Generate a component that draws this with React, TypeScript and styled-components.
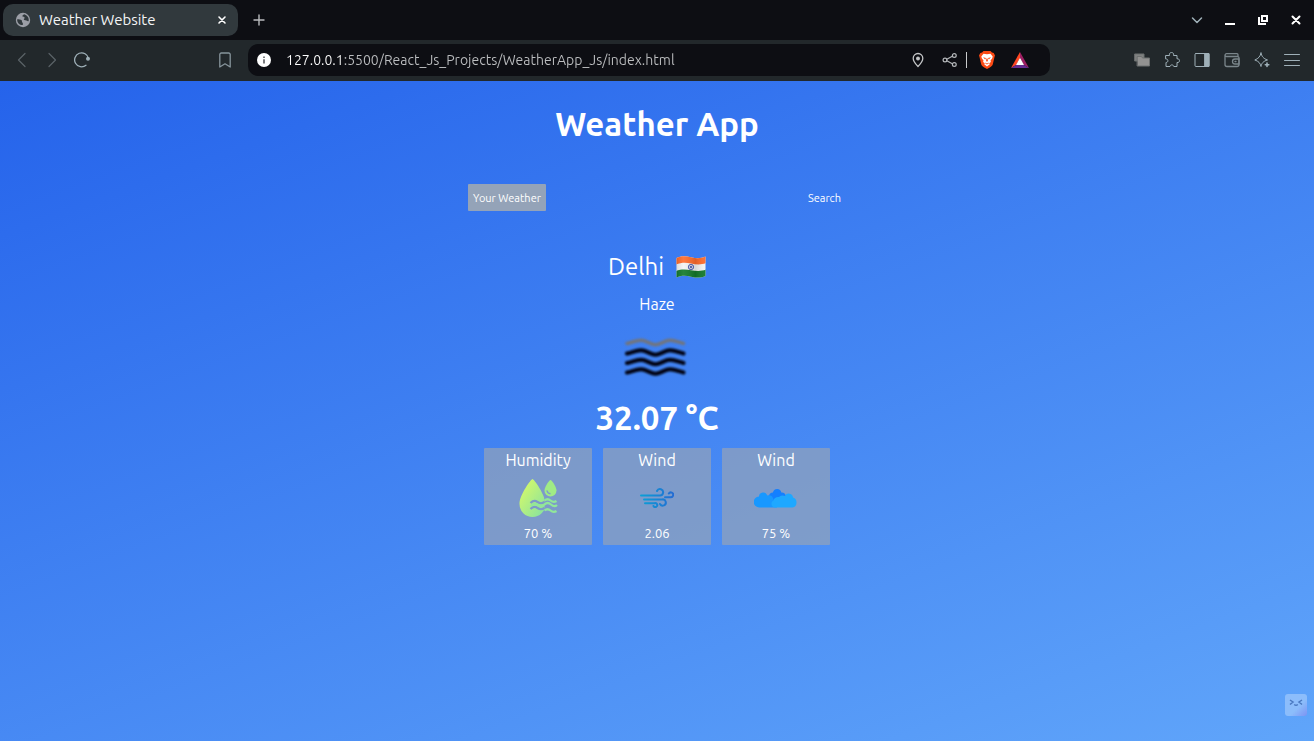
import React from "react";
import styled, { createGlobalStyle, css } from "styled-components";

const GlobalStyle = createGlobalStyle`
  *, *::before, *::after { box-sizing: border-box; }
  body { margin: 0; font-family: Ubuntu, "Noto Sans", sans-serif; }
  h1, h2, p { margin: 0; }
  svg { display: block; flex: none; }
`;

const Window = styled.div`
  display: flex;
  flex-direction: column;
  min-height: 100vh;
`;

const TabStrip = styled.header`
  display: flex;
  align-items: center;
  height: 40px;
  padding: 0 6px 0 3px;
  background: #0d0e13;
`;

const BrowserTab = styled.div`
  display: flex;
  align-items: center;
  gap: 8px;
  width: 235px;
  height: 32px;
  padding: 0 4px 0 12px;
  border-radius: 10px;
  background: #31393d;
`;

const TabTitle = styled.span`
  flex: 1;
  color: #f4f5f6;
  font-size: 15px;
  line-height: 20px;
  white-space: nowrap;
`;

const IconButton = styled.button<{ $color?: string }>`
  display: flex;
  align-items: center;
  justify-content: center;
  flex: none;
  width: 24px;
  height: 24px;
  padding: 0;
  border: 0;
  background: none;
  color: ${(p) => p.$color ?? "#9fb0b8"};
`;

const NewTab = styled.div`
  flex: 1;
  padding-left: 9px;
`;

const WindowControls = styled.div`
  display: flex;
  gap: 9px;
`;

const Toolbar = styled.nav`
  display: flex;
  align-items: center;
  height: 41px;
  padding: 0 10px 1px;
  background: #22282b;
`;

const NavGroup = styled.div`
  display: flex;
  gap: 6px;
`;

const BookmarkSlot = styled.div`
  width: 143px;
  padding-left: 119px;
`;

const AddressBar = styled.div`
  display: flex;
  align-items: center;
  flex: 1;
  min-width: 0;
  height: 32px;
  margin: 0 80px 0 11px;
  padding: 0 18px 0 4px;
  border-radius: 10px;
  background: #0d0e13;
`;

const AddressInput = styled.input`
  flex: 1;
  min-width: 0;
  height: 24px;
  margin-left: 10px;
  padding: 0;
  border: 0;
  outline: 0;
  font: inherit;
  font-size: 14px;
  color: transparent;
  background: linear-gradient(90deg, #ffffff 56px, #bcbec0 56px);
  -webkit-background-clip: text;
  background-clip: text;
`;

const AddressActions = styled.div`
  display: flex;
  align-items: center;
  gap: 8px;
`;

const Divider = styled.span`
  width: 1px;
  height: 16px;
  margin: 0 -4px;
  background: #c8cacc;
`;

const ShieldGroup = styled.div`
  display: flex;
  gap: 9px;
  margin-left: 4px;
`;

const Page = styled.main`
  display: flex;
  flex-direction: column;
  align-items: center;
  flex: 1;
  padding: 21px 16px;
  color: #fff;
  background: linear-gradient(160deg, #2563eb 0%, #60a5fa 100%);
`;

const headline = css`
  font-size: 33px;
  font-weight: 700;
  line-height: 44px;
`;

const Title = styled.h1`
  ${headline}
`;

const ViewTabs = styled.div`
  display: flex;
  justify-content: space-between;
  width: 378px;
  max-width: 100%;
  margin: 38px 0;
`;

const ViewTab = styled.button<{ $active?: boolean }>`
  height: 27px;
  padding: 0 5px;
  border: 0;
  border-radius: 1px;
  color: #fff;
  background: ${(p) => (p.$active ? "#94a3b8" : "transparent")};
  font: inherit;
  font-size: 11px;
  white-space: nowrap;
`;

const City = styled.h2`
  display: flex;
  align-items: center;
  gap: 12px;
  font-size: 24px;
  font-weight: 400;
  line-height: 36px;
`;

const Condition = styled.p`
  margin-top: 7px;
  font-size: 16px;
  line-height: 24px;
`;

const ConditionIcon = styled.div`
  display: flex;
  align-items: center;
  height: 80px;
`;

const Temperature = styled.p`
  ${headline}
`;

const Cards = styled.div`
  display: flex;
  flex-wrap: wrap;
  justify-content: center;
  gap: 11px;
  margin-top: 8px;
`;

const Card = styled.section`
  display: flex;
  flex-direction: column;
  align-items: center;
  width: 108px;
  padding-bottom: 2px;
  border-radius: 1px;
  background: rgba(148, 163, 184, 0.7);
`;

const CardTitle = styled.p`
  font-size: 16px;
  line-height: 24px;
`;

const CardIcon = styled.div`
  display: flex;
  align-items: center;
  height: 52px;
`;

const CardValue = styled.p`
  font-size: 13px;
  line-height: 19px;
`;

const Assistant = styled.button`
  position: fixed;
  right: 7px;
  bottom: 25px;
  width: 22px;
  height: 22px;
  padding: 0;
  border: 0;
  border-radius: 3px;
  background: linear-gradient(135deg, #8cbdfb 60%, #7c93f3 100%);
`;

type StrokeProps = { size?: number; width?: number; children: React.ReactNode };

const Stroke = ({ size = 16, width = 1, children }: StrokeProps) => (
  <svg
    width={size}
    height={size}
    viewBox={`0 0 ${size} ${size}`}
    fill="none"
    stroke="currentColor"
    strokeWidth={width}
    strokeLinecap="round"
    strokeLinejoin="round"
    aria-hidden="true"
  >
    {children}
  </svg>
);

const GlobeIcon = () => (
  <svg width="16" height="16" viewBox="0 0 16 16" aria-hidden="true">
    <circle cx="8" cy="8" r="7.2" fill="#9b9ea6" />
    <path
      d="M2.2 7.2c1.5 0 3.6.1 4.5 1.1.7.9-.2 1.6.7 2.2.7.4.5 1.5.4 2.6-3.2.1-6-2.4-5.600-5.900zM9.200 2.200c-1 .4-2.200 1.300-1.600 2.300.5.800 1.800.2 2.100 1.300.2.900-1.100.7-.9 1.700.2.900 2.500.5 3.700 1.500.5.5 1 .4 1.200-.2.4-3.200-1.500-5.700-4.500-6.600z"
      fill="#31393d"
    />
  </svg>
);

const InfoIcon = () => (
  <svg width="14" height="14" viewBox="0 0 14 14" aria-hidden="true">
    <circle cx="7" cy="7" r="7" fill="#fff" />
    <path d="M6.200 6.200h1.600v4.300H6.200zM6.200 3.400h1.600v1.600H6.200z" fill="#5a5c60" />
  </svg>
);

const BraveIcon = () => (
  <svg width="16" height="18" viewBox="0 0 16 18" aria-hidden="true">
    <path d="M4.500 0h7l1.500 1.600 1.700.3L16 4.500l-.5 1.500-1.700 7.200c-.4 1.400-1.500 2.200-3 3.200L8 18l-2.800-1.600c-1.500-1-2.600-1.800-3-3.200L.5 6 0 4.500l1.300-2.600L3 1.600z" fill="#fb4a14" />
    <path d="M4.500 2.700 8 3.300l3.500-.6 2.200 2.800-.5 1.800-1.700 2.200.4 1.500-1.700 1.200.6 1L8 15.400 5.200 13.200l.6-1-1.700-1.200.4-1.500-1.700-2.200-.5-1.800z" fill="#fff" />
    <path d="M4 6.300l3 .8-.8 1.500zM12 6.300l-3 .8.800 1.500zM7.400 7.500h1.200l.3 2.500-.9.700-.9-.7zM5.900 11.500 8 12.500l2.100-1-.5 1L8 13.500l-1.600-1z" fill="#fb4a14" />
  </svg>
);

const RewardsIcon = () => (
  <svg width="18" height="16" viewBox="0 0 18 16" aria-hidden="true">
    <path d="M9 0 0 16l5.400-3.200L9 6z" fill="#ff4724" />
    <path d="M9 0v6l3.600 6.800L18 16z" fill="#9e1f63" />
    <path d="M0 16h18l-5.400-3.200H5.400z" fill="#662d91" />
    <path d="M9 5.800 5 12.900h8z" fill="#fff" />
  </svg>
);

const FlagIcon = () => (
  <svg width="30" height="24" viewBox="0 0 30 24" role="img" aria-label="India">
    <defs>
      <clipPath id="flag">
        <path d="M.5 3C5 .8 9.500 1 15 2.300S25 3.600 29.500 1.500v19.500c-4.500 2.100-9 1.900-14.500.7S5 20.400.5 22.500z" />
      </clipPath>
      <linearGradient id="fold">
        <stop offset="0" stopColor="#000" stopOpacity=".12" />
        <stop offset=".25" stopColor="#fff" stopOpacity=".08" />
        <stop offset=".65" stopColor="#000" stopOpacity=".12" />
        <stop offset="1" stopColor="#fff" stopOpacity=".05" />
      </linearGradient>
    </defs>
    <g clipPath="url(#flag)">
      <path d="M0 0h30v24H0z" fill="#f4f4f4" />
      <path d="M0 0h30v8C25 10 20 9.500 15 8.500S5 7.500 0 9.500z" fill="#ff6c2c" />
      <path d="M0 24h30v-9.500c-5 2-10 1.500-15 .7S5 14 0 16z" fill="#137a2c" />
      <path d="M0 0h30v24H0z" fill="url(#fold)" />
      <circle cx="15" cy="12" r="2.700" fill="none" stroke="#33449a" strokeWidth=".8" />
      <path d="M15 9.500v5M12.500 12h5M13.300 10.300l3.400 3.400M16.700 10.300l-3.400 3.400" stroke="#33449a" strokeWidth=".4" />
      <circle cx="15" cy="12" r=".8" fill="#33449a" />
    </g>
  </svg>
);

const wave = "c5-1 9-3.200 14-3.200s10 4.400 14.500 4.400 9.500-4.400 14.500-4.400 9 2.200 13.500 3.200";

const HazeIcon = () => (
  <svg width="68" height="48" viewBox="0 0 68 48" role="img" aria-label="Haze">
    <defs>
      <filter id="soft" x="-10%" y="-20%" width="120%" height="140%">
        <feGaussianBlur stdDeviation=".8" />
      </filter>
    </defs>
    <g fill="none" stroke="#000308" strokeWidth="4" strokeLinecap="round" filter="url(#soft)">
      <path d={`M4 11.500${wave}`} stroke="#72757c" strokeWidth="3.500" />
      <path d={`M4 21.500${wave}`} />
      <path d={`M4 31${wave}`} />
      <path d={`M4 40.500${wave}`} />
    </g>
  </svg>
);

const HumidityIcon = () => (
  <svg width="40" height="40" viewBox="0 0 40 40" aria-hidden="true">
    <defs>
      <linearGradient id="lime" x2="1" y2="1">
        <stop offset="0.150" stopColor="#d2f86c" />
        <stop offset=".9" stopColor="#8be39c" />
      </linearGradient>
      <mask id="waterCut">
        <path d="M0 0h40v40H0z" fill="#fff" />
        <path
          d="M12.500 25q3.500-3.500 7-1t7 0M12.500 31q3.500-3.500 7-1t7 0"
          fill="none"
          stroke="#000"
          strokeWidth="2.200"
        />
        <path d="M26.500 20h12v13h-12z" fill="#000" />
        <circle cx="32" cy="13.500" r="7.500" fill="#000" />
      </mask>
    </defs>
    <path d="M14.500 1C16 1 27.500 17 27.500 26a13 13 0 0 1-26 0C1.500 17 13 1 14.500 1z" fill="url(#lime)" mask="url(#waterCut)" />
    <path d="M32.500 2c1 0 6 6.500 6 10.500a6 6 0 0 1-12 0c0-4 5-10.500 6-10.500z" fill="#a0eb85" />
    <path d="M29 12.500q.5 3 3.500 3.300" fill="none" stroke="#7f9bca" strokeWidth="1.500" />
    <path
      d="M13 28q3.500-3.500 7-1t6.500-.5 6.500 0 6 .5M26.500 22.500q3-2.500 6 0t6 .5M26.500 32.500q3-2.500 6 0t6 .5"
      fill="none"
      stroke="#91e79a"
      strokeWidth="2.200"
    />
  </svg>
);

const WindIcon = () => (
  <svg width="34" height="20" viewBox="0 0 34 20" fill="none" strokeWidth="2" strokeLinecap="round" aria-hidden="true">
    <defs>
      <linearGradient id="breeze" gradientUnits="userSpaceOnUse" x1="0" x2="34">
        <stop offset="0" stopColor="#0aa1d6" />
        <stop offset="1" stopColor="#246bd3" />
      </linearGradient>
    </defs>
    <g stroke="url(#breeze)">
      <path d="M1 7.500h18.500a3.200 3.200 0 1 0-2.500-4.500" />
      <path d="M4 11.500h18a3.100 3.100 0 1 1-2 4.500" />
      <path d="M5 15.200h9.500a2 2 0 1 1-1 2.800" />
      <path d="M25 9.200h5.500a2.400 2.400 0 1 0-1.700-3.700" />
    </g>
  </svg>
);

const CloudIcon = () => (
  <svg width="44" height="20" viewBox="0 0 44 20" aria-hidden="true">
    <path d="M15 8a4 4 0 0 1 4-3.500 4.200 4.200 0 0 1 8.300 0 4 4 0 0 1 4.700 4L20 14z" fill="#147fff" />
    <path d="M5.500 19.500a5.500 5.500 0 0 1-.5-11 4.200 4.200 0 0 1 8.200-1c3-.8 5.300.5 6 3l3.800 9z" fill="#1898ff" />
    <path d="M21 19.500a3.700 3.700 0 0 1-1.500-7c.5-2.500 3-4 5.500-3.500a6 6 0 0 1 6-1 4.200 4.200 0 0 1 8 1.500 5.200 5.200 0 0 1-.5 10z" fill="#1ea8ff" />
  </svg>
);

const toolbarActions = [
  {
    label: "Tab groups",
    color: "#8b8d8c",
    icon: (
      <g stroke="#6d7070">
        <path d="M1 2h9v7H1z" fill="#7f8180" />
        <path d="M3.500 4.500h4l1 1.500h7v8h-12z" fill="#929291" />
      </g>
    ),
  },
  {
    label: "Extensions",
    icon: (
      <path d="M2 3.500h3.500c-.4-2 .5-3 2-3s2.500 1 2 3h3.500v3.300c1.500-.2 2.500.6 2.500 1.900s-1 2-2.500 1.800v4h-3.200c-.2-1-.9-1.600-1.900-1.600s-1.700.6-1.900 1.600H2v-4c1.200 0 1.900-.7 1.900-1.800S3.200 7 2 6.900z" />
    ),
  },
  {
    label: "Sidebar",
    icon: (
      <>
        <rect x="1" y="1.500" width="14" height="13" rx="1" />
        <path d="M11 1.500h4v13h-4z" fill="currentColor" />
      </>
    ),
  },
  {
    label: "Wallet",
    color: "#7b868b",
    icon: (
      <g strokeWidth="1.300">
        <path d="M1 3v9.500a2 2 0 0 0 2 2h10a2 2 0 0 0 2-2V6a1.500 1.500 0 0 0-1.500-1.500H2.500a1.400 1.400 0 0 1 0-2.800h10.500a1 1 0 0 1 1 1v1.800" />
        <path d="M15 7h-4a2.500 2.500 0 0 0 0 5h4zM11 9.500h1" />
      </g>
    ),
  },
  {
    label: "Leo AI",
    icon: (
      <>
        <path d="M7 1c.7 3.500 2.300 5.500 6.500 7-4.200 1.200-5.800 3-6.500 6.500C6.300 11 4.500 9.200.8 8 4.500 6.500 6.300 4.500 7 1z" />
        <path d="M13 11v3.500M11.300 12.800h3.500" strokeWidth="1.600" />
      </>
    ),
  },
  { label: "Menu", icon: <path d="M.5 2.500h15M.5 8.500h15M.5 13.500h15" /> },
];

const readings = [
  { id: "humidity", title: "Humidity", value: "70 %", icon: <HumidityIcon /> },
  { id: "wind", title: "Wind", value: "2.06", icon: <WindIcon /> },
  { id: "clouds", title: "Wind", value: "75 %", icon: <CloudIcon /> },
];

export default function App() {
  return (
    <Window>
      <GlobalStyle />
      <TabStrip>
        <BrowserTab>
          <GlobeIcon />
          <TabTitle>Weather Website</TabTitle>
          <IconButton $color="#fff" aria-label="Close tab">
            <Stroke size={10} width={1.6}>
              <path d="M2 2l6 6M8 2l-6 6" />
            </Stroke>
          </IconButton>
        </BrowserTab>
        <NewTab>
          <IconButton $color="#b9bbbe" aria-label="New tab">
            <Stroke size={12} width={1.4}>
              <path d="M6 1v10M1 6h10" />
            </Stroke>
          </IconButton>
        </NewTab>
        <WindowControls>
          <IconButton aria-label="Search tabs">
            <Stroke size={12} width={1.5}>
              <path d="M1.500 4 6 8.500 10.500 4" />
            </Stroke>
          </IconButton>
          <IconButton $color="#fff" aria-label="Minimize">
            <svg width="12" height="12" viewBox="0 0 12 12">
              <path d="M1 9h10v2H1z" fill="currentColor" />
            </svg>
          </IconButton>
          <IconButton $color="#fff" aria-label="Restore">
            <svg width="12" height="12" viewBox="0 0 12 12" fill="none" stroke="currentColor" strokeWidth="2">
              <path d="M5 2h5v5H5zM2 3v7h7" />
            </svg>
          </IconButton>
          <IconButton $color="#fff" aria-label="Close window">
            <Stroke size={12} width={2}>
              <path d="M2.500 2.500l7 7M9.500 2.500l-7 7" />
            </Stroke>
          </IconButton>
        </WindowControls>
      </TabStrip>

      <Toolbar>
        <NavGroup>
          <IconButton $color="#5a6267" aria-label="Back">
            <Stroke width={1.2}>
              <path d="M11 1.500 4.500 8l6.500 6.500" />
            </Stroke>
          </IconButton>
          <IconButton $color="#5a6267" aria-label="Forward">
            <Stroke width={1.2}>
              <path d="M5 1.500 11.500 8 5 14.500" />
            </Stroke>
          </IconButton>
          <IconButton aria-label="Reload">
            <Stroke width={1.3}>
              <path d="M12 13.300A7 7 0 1 1 14.500 6.500" />
              <circle cx="14" cy="6.800" r="1.300" fill="currentColor" />
            </Stroke>
          </IconButton>
        </NavGroup>
        <BookmarkSlot>
          <IconButton $color="#87959c" aria-label="Bookmark">
            <Stroke width={1.3}>
              <path d="M2.800 15V2.500a1.500 1.500 0 0 1 1.500-1.500h7.400a1.500 1.500 0 0 1 1.500 1.500V15L8 11.800z" />
            </Stroke>
          </IconButton>
        </BookmarkSlot>
        <AddressBar>
          <IconButton aria-label="Site information">
            <InfoIcon />
          </IconButton>
          <AddressInput
            aria-label="Address"
            defaultValue="127.0.0.1:5500/React_Js_Projects/WeatherApp_Js/index.html"
          />
          <AddressActions>
            <IconButton $color="#c3c5c7" aria-label="Location">
              <Stroke width={1.3}>
                <path d="M8 14.500C4.500 11 3.200 8.500 3.200 6.300a4.800 4.800 0 0 1 9.600 0c0 2.200-1.300 4.700-4.800 8.200z" />
                <circle cx="8" cy="6.500" r="1.300" fill="currentColor" />
              </Stroke>
            </IconButton>
            <IconButton $color="#b4b7ba" aria-label="Share">
              <Stroke width={1.2}>
                <path d="M4.800 7.200l5.500-3M4.800 8.800l5.500 3" />
                <circle cx="3" cy="8" r="1.900" />
                <circle cx="12.300" cy="3.500" r="1.900" />
                <circle cx="12.300" cy="12.500" r="1.900" />
              </Stroke>
            </IconButton>
            <Divider />
            <ShieldGroup>
              <IconButton aria-label="Shields">
                <BraveIcon />
              </IconButton>
              <IconButton aria-label="Rewards">
                <RewardsIcon />
              </IconButton>
            </ShieldGroup>
          </AddressActions>
        </AddressBar>
        <NavGroup>
          {toolbarActions.map((action) => (
            <IconButton key={action.label} $color={action.color} aria-label={action.label}>
              <Stroke>{action.icon}</Stroke>
            </IconButton>
          ))}
        </NavGroup>
      </Toolbar>

      <Page>
        <Title>Weather App</Title>
        <ViewTabs>
          <ViewTab $active>Your Weather</ViewTab>
          <ViewTab>Search</ViewTab>
        </ViewTabs>
        <City>
          Delhi <FlagIcon />
        </City>
        <Condition>Haze</Condition>
        <ConditionIcon>
          <HazeIcon />
        </ConditionIcon>
        <Temperature>32.07 °C</Temperature>
        <Cards>
          {readings.map((reading) => (
            <Card key={reading.id}>
              <CardTitle>{reading.title}</CardTitle>
              <CardIcon>{reading.icon}</CardIcon>
              <CardValue>{reading.value}</CardValue>
            </Card>
          ))}
        </Cards>
      </Page>

      <Assistant aria-label="Assistant">
        <svg width="22" height="22" viewBox="0 0 22 22" fill="none" stroke="#4a78c0" strokeWidth="1.500" aria-hidden="true">
          <path d="M5 6l3 2-3 2.500M17 6l-3 2 3 2.500M9.200 10.500q1.800 1.500 3.600 0" />
        </svg>
      </Assistant>
    </Window>
  );
}
